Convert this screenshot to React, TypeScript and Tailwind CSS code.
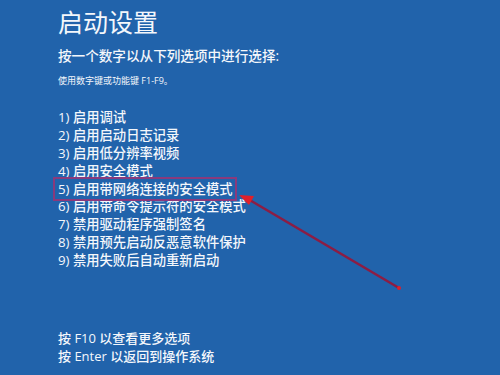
import React from "react";

const items = [
  "1) 启用调试",
  "2) 启用启动日志记录",
  "3) 启用低分辨率视频",
  "4) 启用安全模式",
  "5) 启用带网络连接的安全模式",
  "6) 启用带命令提示符的安全模式",
  "7) 禁用驱动程序强制签名",
  "8) 禁用预先启动反恶意软件保护",
  "9) 禁用失败后自动重新启动",
];

export default function App() {
  return (
    <div
      className="relative w-[500px] h-[375px] overflow-hidden bg-[#2163ab] text-[#f4f7fb]"
      style={{ fontFamily: '"Open Sans", "Noto Sans CJK SC", sans-serif' }}
    >
      <div className="flex flex-col pl-[58px]">
        <div className="mt-[7px] text-[25px] leading-[30px]">启动设置</div>
        <div className="mt-[10px] text-[13.6px] leading-[18px] font-medium">按一个数字以从下列选项中进行选择:</div>
        <div className="mt-[10px] text-[9px] leading-[12px]">使用数字键或功能键 F1-F9。</div>
        <div className="mt-[22px] flex flex-col">
          {items.map((t, i) => (
            <div key={i} className="text-[13.3px] leading-[17.9px] h-[17.9px] font-medium">
              {i === 4 ? (
                <span className="relative">
                  {t}
                  <span className="absolute left-[-5px] right-[-4px] top-[-3px] bottom-[-3px] border-2 border-[#8a3a7c]" />
                </span>
              ) : (
                t
              )}
            </div>
          ))}
        </div>
        <div className="mt-[59px] flex flex-col text-[13px] leading-[18px] font-medium">
          <div>按 F10 以查看更多选项</div>
          <div>按 Enter 以返回到操作系统</div>
        </div>
      </div>
      <svg className="absolute inset-0 pointer-events-none" width="500" height="375" viewBox="0 0 500 375">
        <line x1="399" y1="288" x2="248" y2="199" stroke="#8c1d44" strokeWidth="2.6" strokeLinecap="round" />
        <polygon points="239,195 254,196 249,205" fill="#e0202a" />
        <circle cx="399" cy="288" r="2" fill="#e0202a" />
      </svg>
    </div>
  );
}
